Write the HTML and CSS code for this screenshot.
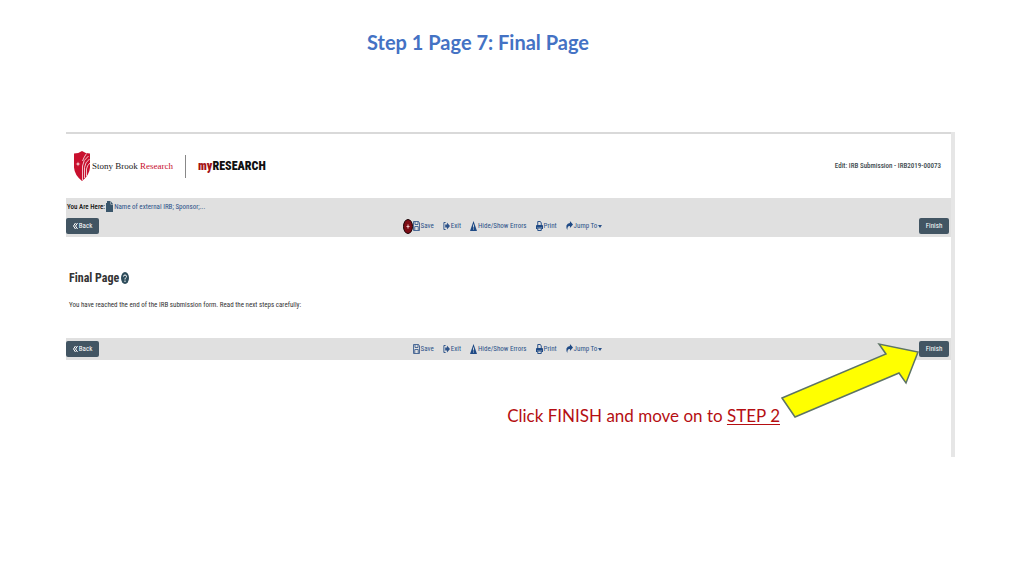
FILE: index.html
```html
<!DOCTYPE html>
<html lang="en">

<head>
    <meta charset="UTF-8">
    <meta name="viewport" content="width=device-width, initial-scale=1.0">
    <title>Step 1 Page 7: Final Page</title>
    <link rel="stylesheet" href="styles.css">
</head>

<body>

    <!-- Shared icons -->
    <svg class="sprite" aria-hidden="true">
        <symbol id="icon-save" viewBox="0 0 14 20" preserveAspectRatio="none">
            <path d="M1 1h10l2 3v15H1z M4 1v6h6V1 M3.500 19v-8h7v8" fill="none" stroke="#3d5f8f" stroke-width="1.800"/>
        </symbol>
        <symbol id="icon-exit" viewBox="0 0 16 20" preserveAspectRatio="none">
            <path d="M6 3H2v14h4" fill="none" stroke="#2c5289" stroke-width="2"/>
            <path d="M5 7h4V3l7 7-7 7v-4H5z" fill="#2c5289"/>
        </symbol>
        <symbol id="icon-warn" viewBox="0 0 16 20" preserveAspectRatio="none">
            <path d="M8 0l8 20H0z" fill="#1f4a85"/>
            <path d="M7 7h2v6H7z M7 15h2v2H7z" fill="#e0e0e0"/>
        </symbol>
        <symbol id="icon-print" viewBox="0 0 16 20" preserveAspectRatio="none">
            <path d="M4 9V1h6l2 3v5 M4 14h8v5H4z" fill="none" stroke="#1f4a85" stroke-width="2"/>
            <path d="M0 10q0-2 2-2h12q2 0 2 2v6h-3v-3H3v3H0z" fill="#1f4a85"/>
        </symbol>
        <symbol id="icon-jump" viewBox="0 0 16 20" preserveAspectRatio="none">
            <path d="M9 0l7 7-7 7v-4Q3 9 3 18Q0 14 1 9Q3 4 9 4z" fill="#1f4a85"/>
        </symbol>
    </svg>

    <h1 class="step-title">Step 1 Page 7: Final Page</h1>

    <main class="screen">
        <div class="panel">
            <header class="site-header">
                <div class="brand">
                    <svg class="shield" viewBox="0 0 32 60" preserveAspectRatio="none" aria-hidden="true">
                        <path d="M0 5Q9 5 16 0Q23 5 32 5V33Q31 48 16 60Q1 48 0 33z" fill="#c8102e"/>
                        <path d="M17 58V30Q18 18 29 10 M21 54V33Q22 23 31 16 M25 50V36Q26 29 32 24 M17 20Q20 12 25 5" fill="none" stroke="#fff" stroke-width="1.500"/>
                        <path d="M8 21l1 4 4 1-4 1-1 4-1-4-4-1 4-1z" fill="#fff"/>
                    </svg>
                    <span class="brand-name">Stony Brook <span class="brand-red">Research</span></span>
                    <span class="product"><span class="product-my">my</span>RESEARCH</span>
                </div>
                <span class="submission">Edit: IRB Submission - IRB2019-00073</span>
            </header>

            <div class="bar">
                <nav class="breadcrumb" aria-label="Breadcrumb">
                    <b>You Are Here:</b>
                    <svg class="doc-icon" viewBox="0 0 14 22" preserveAspectRatio="none" aria-hidden="true">
                        <path d="M0 4h2V0h7v7h5v15H0z" fill="#3a566b"/>
                        <path d="M10 1l4 5h-4z" fill="#3a566b"/>
                    </svg>
                    <a href="#">Name of external IRB; Sponsor;...</a>
                </nav>
                <div class="toolbar">
                    <button type="button" class="btn btn-back"><svg viewBox="0 0 10 12" aria-hidden="true"><path d="M5 0L1 6l4 6M9 0L5 6l4 6"/></svg>Back</button>
                    <div class="tools">
                        <svg class="marker" viewBox="0 0 20 30" preserveAspectRatio="none" aria-hidden="true">
                            <ellipse cx="10" cy="15" rx="9" ry="14" fill="#7d0c14" stroke="#190306" stroke-width="2"/>
                            <path d="M9 11h2v3h2v2h-2v3H9v-3H7v-2h2z" fill="#f0c8c8"/>
                        </svg>
                        <a href="#"><svg aria-hidden="true"><use href="#icon-save"/></svg>Save</a>
                        <a href="#"><svg aria-hidden="true"><use href="#icon-exit"/></svg>Exit</a>
                        <a href="#"><svg aria-hidden="true"><use href="#icon-warn"/></svg>Hide/Show Errors</a>
                        <a href="#"><svg aria-hidden="true"><use href="#icon-print"/></svg>Print</a>
                        <a href="#" class="jump"><svg aria-hidden="true"><use href="#icon-jump"/></svg>Jump To</a>
                    </div>
                    <button type="button" class="btn btn-finish">Finish</button>
                </div>
            </div>

            <section class="content">
                <h2>Final Page
                    <svg class="help" viewBox="0 0 16 24" preserveAspectRatio="none" aria-hidden="true">
                        <ellipse cx="8" cy="12" rx="8" ry="12" fill="#2f4d5c"/>
                        <path d="M5 9Q5 6 8 6t3 3q0 2-2 3-1 1-1 3M8 17v3" fill="none" stroke="#fff" stroke-width="2"/>
                    </svg>
                </h2>
                <p>You have reached the end of the IRB submission form. Read the next steps carefully:</p>
            </section>

            <div class="bar">
                <div class="toolbar">
                    <button type="button" class="btn btn-back"><svg viewBox="0 0 10 12" aria-hidden="true"><path d="M5 0L1 6l4 6M9 0L5 6l4 6"/></svg>Back</button>
                    <div class="tools">
                        <a href="#"><svg aria-hidden="true"><use href="#icon-save"/></svg>Save</a>
                        <a href="#"><svg aria-hidden="true"><use href="#icon-exit"/></svg>Exit</a>
                        <a href="#"><svg aria-hidden="true"><use href="#icon-warn"/></svg>Hide/Show Errors</a>
                        <a href="#"><svg aria-hidden="true"><use href="#icon-print"/></svg>Print</a>
                        <a href="#" class="jump"><svg aria-hidden="true"><use href="#icon-jump"/></svg>Jump To</a>
                    </div>
                    <button type="button" class="btn btn-finish">Finish</button>
                </div>
            </div>

            <div class="instruction">
                <p>Click FINISH and move on to <u>STEP 2</u></p>
                <svg class="arrow" viewBox="0 0 140 78" aria-hidden="true">
                    <path d="M2 57L106 13L99 3L138 11L126 42L119 32L15 76z" fill="#ffff00" stroke="#5d7464" stroke-width="1.500"/>
                </svg>
            </div>
        </div>
        <div class="scroll-track"></div>
    </main>

</body>

</html>
```
FILE: styles.css
```css
body {
    margin: 0;
    background-color: #fff;
    font-family: "Roboto Condensed", Roboto, sans-serif;
    font-size: 7px;
    line-height: 10px;
    color: #333;
}

a {
    color: #2c5289;
    text-decoration: none;
}

.sprite {
    display: none;
}

.step-title {
    margin: 0;
    padding: 30px 68px 0 0;
    font-family: Lato, sans-serif;
    font-size: 20px;
    line-height: 24px;
    text-align: center;
    color: #4472c4;
}

.screen {
    display: flex;
    margin: 78px 69px 0 66px;
}

.panel {
    flex: 1;
    border-top: 2px solid #d9d9d9;
}

.scroll-track {
    width: 4px;
    background-color: #e6e6e6;
}

.site-header {
    display: flex;
    align-items: center;
    justify-content: space-between;
    height: 64px;
    padding: 0 10px 0 8px;
}

.brand {
    display: flex;
    align-items: center;
}

.shield {
    width: 16px;
    height: 30px;
    margin-right: 2px;
}

.brand-name {
    padding-right: 12px;
    border-right: 1px solid #888;
    font-family: "Liberation Serif", serif;
    font-size: 9px;
    line-height: 23px;
    color: #222;
}

.brand-red {
    color: #c8102e;
}

.product {
    padding-left: 12px;
    font-size: 12px;
    font-weight: 900;
    color: #111;
}

.product-my {
    color: #a51417;
}

.submission {
    font-weight: 500;
    color: #3c4a4e;
}

.bar {
    background-color: #e0e0e0;
}

.breadcrumb {
    display: flex;
    align-items: center;
    gap: 1px;
    height: 17px;
    padding-left: 1px;
    color: #111;
}

.breadcrumb b {
    font-weight: 500;
}

.doc-icon {
    width: 7px;
    height: 11px;
}

.toolbar {
    display: grid;
    grid-template-columns: 1fr auto 1fr;
    align-items: center;
    height: 22px;
    padding-right: 2px;
}

.btn {
    display: flex;
    align-items: center;
    justify-content: center;
    gap: 1px;
    height: 16px;
    padding: 0;
    border: none;
    border-radius: 2px;
    background-color: #425563;
    color: #fff;
    font: inherit;
    cursor: pointer;
}

.btn-back {
    width: 33px;
}

.btn-back svg {
    width: 5px;
    height: 6px;
    fill: none;
    stroke: #fff;
    stroke-width: 2;
}

.btn-finish {
    width: 30px;
    justify-self: end;
}

.tools {
    display: flex;
    position: relative;
    gap: 9px;
}

.tools a {
    display: flex;
    align-items: center;
    gap: 1px;
}

.tools a svg {
    width: 7px;
    height: 10px;
}

/* small drop-down caret after the label */
.jump::after {
    content: "";
    border: 2px solid transparent;
    border-top: 3px solid #2c5289;
    border-bottom: none;
}

.marker {
    position: absolute;
    top: -2px;
    left: -10px;
    width: 10px;
    height: 15px;
}

.content {
    height: 69px;
    padding: 32px 3px 0;
}

.content h2 {
    display: flex;
    align-items: center;
    gap: 2px;
    margin: 0;
    font-size: 12px;
    line-height: 18px;
}

.help {
    width: 8px;
    height: 12px;
}

.content p {
    margin: 13px 0 0;
}

.instruction {
    position: relative;
    padding: 44px 171px 29px 0;
    text-align: right;
}

.instruction p {
    margin: 0;
    font-family: Lato, sans-serif;
    font-size: 17px;
    line-height: 24px;
    color: #b50e12;
}

.instruction u {
    text-underline-offset: 2px;
}

.arrow {
    position: absolute;
    top: -19px;
    right: 31px;
    width: 140px;
    height: 78px;
}
```
